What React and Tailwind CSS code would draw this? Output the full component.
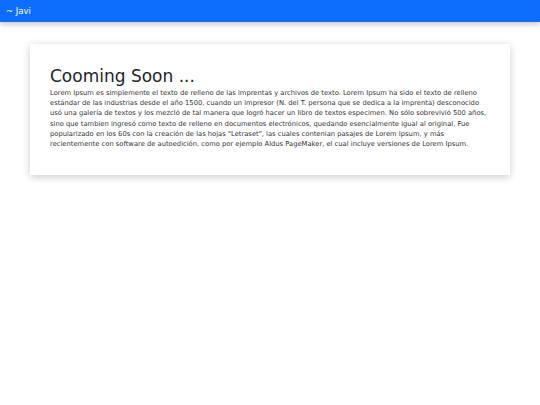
export default function App() {
  return (
    <div className="min-h-screen bg-white" style={{ fontFamily: '"DejaVu Sans", sans-serif' }}>
      <nav className="h-[22px] bg-[#0d6efd] flex items-center px-[6px] shadow-[0_2px_6px_rgba(0,0,0,0.25)]">
        <span className="text-white text-[8.5px]">~ Javi</span>
      </nav>
      <div className="px-[30px] pt-[22px]">
        <div className="bg-white shadow-[0_2px_8px_rgba(0,0,0,0.2)] px-[20px] pt-[20px] pb-[26px]">
          <h1 className="text-[17px] leading-[24px] text-[#212529]">Cooming Soon ...</h1>
          <p className="text-[6.75px] leading-[10.2px] text-[#333]">
            Lorem Ipsum es simplemente el texto de relleno de las imprentas y archivos de texto. Lorem Ipsum ha sido el texto de relleno estándar de las industrias desde el año 1500, cuando un impresor (N. del T. persona que se dedica a la imprenta) desconocido usó una galería de textos y los mezcló de tal manera que logró hacer un libro de textos especimen. No sólo sobrevivió 500 años, sino que tambien ingresó como texto de relleno en documentos electrónicos, quedando esencialmente igual al original. Fue popularizado en los 60s con la creación de las hojas "Letraset", las cuales contenian pasajes de Lorem Ipsum, y más recientemente con software de autoedición, como por ejemplo Aldus PageMaker, el cual incluye versiones de Lorem Ipsum.
          </p>
        </div>
      </div>
    </div>
  );
}
